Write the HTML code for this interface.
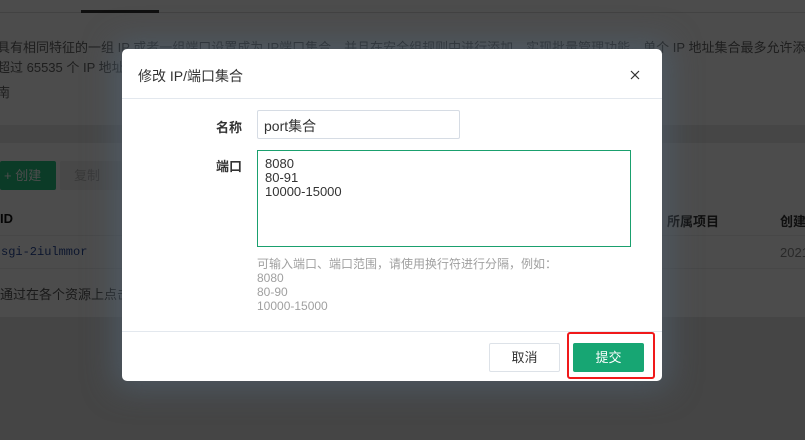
<!DOCTYPE html>
<html><head><meta charset="utf-8"><style>
*{margin:0;padding:0;box-sizing:border-box}
html,body{width:805px;height:440px;overflow:hidden}
body{background:#e6e6e6;font-family:"Liberation Sans","Noto Sans CJK SC",sans-serif;position:relative}
.a{position:absolute;white-space:nowrap}
.card{position:absolute;left:0;top:0;width:805px;height:317px;background:#fff}
.band{position:absolute;left:0;top:125px;width:805px;height:18px;background:#eaeaea}
.bt{color:#646464;font-size:13px}
.ov{position:absolute;left:0;top:0;width:805px;height:440px;background:rgba(0,0,0,.7)}
.modal{position:absolute;left:122px;top:49px;width:540px;height:332px;background:#fff;border-radius:5px;box-shadow:0 0 30px 8px rgba(80,95,110,.7)}
.lbl{font-size:13px;font-weight:bold;color:#333}
.hint{font-size:12px;color:#a0a0a0;line-height:14px}
</style></head><body>
<div class="card"></div>
<div class="band"></div>
<div class="a" style="left:0;top:0;width:805px;height:13px;border-bottom:1px solid #ddd"></div>
<div class="a" style="left:81px;top:10px;width:78px;height:3px;background:#333"></div>
<div class="a" style="left:0;top:37px;width:805px;overflow:hidden"><div class="bt" style="margin-left:-3px;white-space:nowrap">具有相同特征的一组 IP 或者一组端口设置成为 IP端口集合，并且在安全组规则中进行添加，实现批量管理功能。单个 IP 地址集合最多允许添加 65535 个</div></div>
<div class="a bt" style="left:-3px;top:57px">超过 65535 个 IP 地址。</div>
<div class="a bt" style="left:-3px;top:82px">南</div>
<div class="a" style="left:0;top:161px;width:56px;height:29px;background:#25c582;border-radius:2px;color:#fff;font-size:13px;line-height:29px;padding-left:4px">+ 创建</div>
<div class="a" style="left:60px;top:161px;width:62px;height:29px;background:#f2f2f2;border-radius:2px;color:#bbb;font-size:13px;line-height:29px;padding-left:14px">复制</div>
<div class="a" style="left:0;top:211px;color:#111;font-weight:bold;font-size:13px">ID</div>
<div class="a" style="left:667px;top:211px;color:#333;font-weight:bold;font-size:13px">所属项目</div>
<div class="a" style="left:780px;top:211px;color:#333;font-weight:bold;font-size:13px">创建</div>
<div class="a" style="left:0;top:235px;width:805px;height:1px;background:#eee"></div>
<div class="a" style="left:1px;top:245px;color:#2a4a9a;font-family:'Liberation Mono',monospace;font-size:12px">sgi-2iulmmor</div>
<div class="a" style="left:780px;top:245px;color:#888;font-size:13px">2021</div>
<div class="a" style="left:0;top:268px;width:805px;height:1px;background:#eee"></div>
<div class="a bt" style="left:0;top:284px;color:#555">通过在各个资源上点击</div>
<div class="ov"></div>

<div class="modal">
 <div class="a" style="left:16px;top:17px;font-size:14px;color:#333">修改 IP/端口集合</div>
 <svg class="a" style="left:508px;top:21px" width="10" height="10" viewBox="0 0 10 10"><path d="M1 1L9 9M9 1L1 9" stroke="#333" stroke-width="1.2"/></svg>
 <div class="a" style="left:0;top:49px;width:540px;height:1px;background:#e3e8ee"></div>
 <div class="a lbl" style="left:94px;top:68px">名称</div>
 <div class="a" style="left:135px;top:61px;width:203px;height:29px;border:1px solid #d6dce4;border-radius:2px;font-size:14px;color:#333;padding:5px 6px">port集合</div>
 <div class="a lbl" style="left:94px;top:107px">端口</div>
 <div class="a" style="left:135px;top:101px;width:374px;height:97px;border:1px solid #1aa06e;font-size:13px;color:#333;line-height:14px;padding:6px 7px;white-space:pre">8080
80-91
10000-15000</div>
 <div class="a hint" style="left:135px;top:208px">可输入端口、端口范围，请使用换行符进行分隔，例如：<br>8080<br>80-90<br>10000-15000</div>
 <div class="a" style="left:0;top:282px;width:540px;height:1px;background:#e3e8ee"></div>
 <div class="a" style="left:367px;top:294px;width:71px;height:29px;border:1px solid #dde2e8;border-radius:2px;font-size:13px;color:#333;text-align:center;line-height:27px">取消</div>
 <div class="a" style="left:451px;top:294px;width:71px;height:29px;background:#17a673;border-radius:2px;font-size:13px;color:#fff;text-align:center;line-height:29px">提交</div>
 <div class="a" style="left:445px;top:283px;width:88px;height:47px;border:2px solid #f0191a;border-radius:3px"></div>
</div>
</body></html>
